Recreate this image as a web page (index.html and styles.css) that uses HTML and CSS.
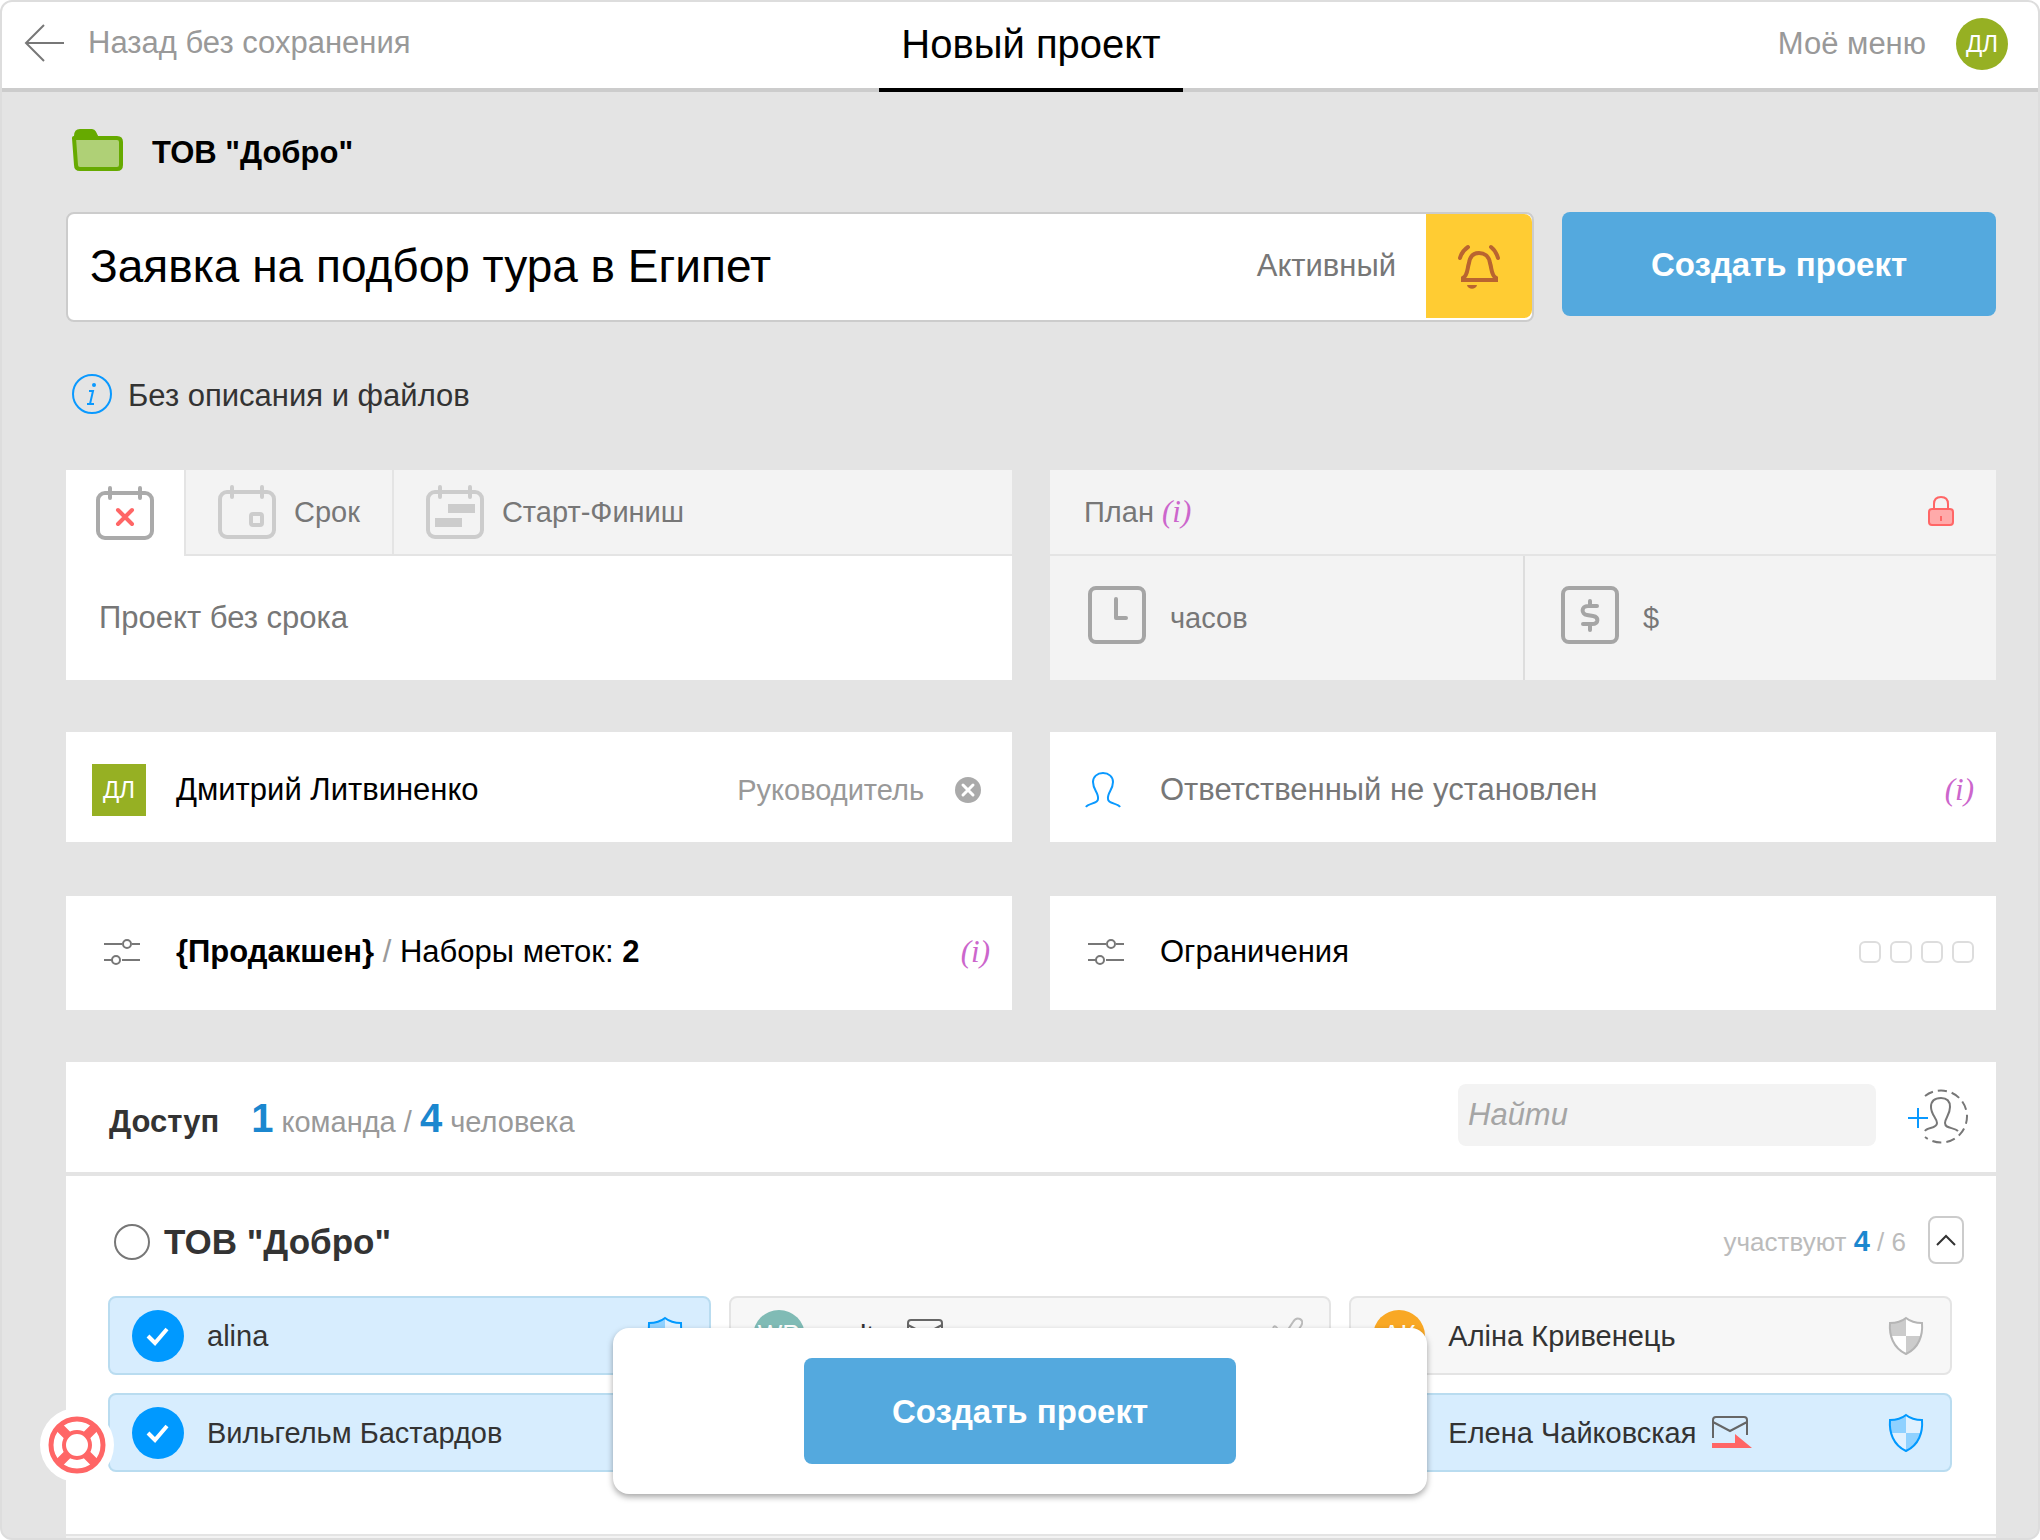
FILE: index.html
```html
<!DOCTYPE html>
<html lang="ru">
<head>
<meta charset="utf-8">
<title>Новый проект</title>
<meta name="viewport" content="width=device-width, initial-scale=1">
<link rel="stylesheet" href="styles.css">
</head>
<body>
<svg class="sprite" aria-hidden="true">
  <symbol id="calendar" viewBox="0 0 58 54">
    <rect x="2" y="7" width="54" height="45" rx="7" fill="none" stroke="currentColor" stroke-width="4"/>
    <path d="M14 2v10M44 2v10" stroke="currentColor" stroke-width="4" stroke-linecap="round"/>
  </symbol>
  <symbol id="sliders" viewBox="0 0 36 26">
    <g fill="none" stroke="currentColor" stroke-width="2">
      <path d="M0 5h18M28 5h8M0 21h8M18 21h18"/>
      <circle cx="23" cy="5" r="4"/><circle cx="12" cy="21" r="4"/>
    </g>
  </symbol>
  <symbol id="shield" viewBox="0 0 36 40">
    <path class="shield-base" d="M18 2C13 6 8 7 2 7C1 19 5 32 18 38C31 32 35 19 34 7C28 7 23 6 18 2z"/>
    <path class="shield-fill" d="M18 2C13 6 8 7 2 7C2 12 2 16 3 20H18zM18 20H33C31 28 27 34 18 38z"/>
    <path d="M18 2C13 6 8 7 2 7C1 19 5 32 18 38C31 32 35 19 34 7C28 7 23 6 18 2z" fill="none" stroke="currentColor" stroke-width="2"/>
  </symbol>
  <symbol id="mail" viewBox="0 0 40 34">
    <path d="M1 22V4q0-3 3-3h28q3 0 3 3v15M1 6l17 9L35 6" fill="none" stroke="#666" stroke-width="2"/>
    <path d="M0 27h23v-9l17 14H0z" fill="#f66"/>
  </symbol>
  <symbol id="check" viewBox="0 0 24 20">
    <path d="M2 10l7 7L21 3" fill="none" stroke="#fff" stroke-width="4"/>
  </symbol>
</svg>

<div class="frame">
  <header class="topbar">
    <a class="back" href="#">
      <svg width="40" height="40" viewBox="0 0 40 40"><path d="M20 2L2 20l18 18M2 20h38" fill="none" stroke="#777" stroke-width="2"/></svg>
      Назад без сохранения
    </a>
    <h1 class="page-title">Новый проект</h1>
    <a class="user-menu" href="#">Моё меню <span class="avatar avatar-green">ДЛ</span></a>
  </header>

  <main class="content">
    <div class="company">
      <svg width="52" height="44" viewBox="0 0 52 44">
        <path d="M3 8q0-6 5-6h12q2 0 3 2l2 4z" fill="#6a0" stroke="#6a0" stroke-width="2"/>
        <path d="M2 10h43q4 0 4 4v23q0 4-4 4H8q-4 0-4-4z" fill="#afd076" stroke="#6a0" stroke-width="4" stroke-linejoin="round"/>
      </svg>
      <strong>ТОВ "Добро"</strong>
    </div>

    <div class="title-row">
      <div class="title-box">
        <input class="title-input" type="text" aria-label="Название проекта" value="Заявка на подбор тура в Египет">
        <span class="status">Активный</span>
        <button class="bell" type="button" aria-label="Уведомления">
          <svg width="46" height="50" viewBox="0 0 46 50">
            <g fill="none" stroke="#b96430" stroke-width="4" stroke-linecap="round">
              <path d="M12 6Q6 10 4 17M35 6Q40 10 42 17"/>
              <path d="M7 39V37C12 34 11 28 13 22C14 15 18 12 23 12S33 15 34 22C36 28 35 34 40 37V39Z" stroke-linecap="butt"/>
            </g>
            <path d="M11 44h10c-1 5-9 5-10 0z" fill="#b96430"/>
          </svg>
        </button>
      </div>
      <button class="primary top-submit" type="button">Создать проект</button>
    </div>

    <div class="description">
      <svg width="40" height="40" viewBox="0 0 40 40">
        <circle cx="20" cy="20" r="19" fill="none" stroke="#0a99ff" stroke-width="2"/>
        <circle cx="22" cy="11" r="2" fill="#0a99ff"/>
        <path d="M17 17h4l-3 13h4M15 30h4" fill="none" stroke="#0a99ff" stroke-width="2"/>
      </svg>
      Без описания и файлов
    </div>

    <div class="pair">
      <section class="panel">
        <div class="tabs" role="tablist">
          <button class="tab active" type="button" role="tab" aria-selected="true" aria-label="Без срока">
            <svg width="58" height="54" viewBox="0 0 58 54"><use href="#calendar"/><path d="M22 24l14 14M36 24L22 38" stroke="#f66" stroke-width="4" stroke-linecap="round"/></svg>
          </button>
          <button class="tab" type="button" role="tab" aria-selected="false">
            <svg width="58" height="54" viewBox="0 0 58 54"><use href="#calendar"/><rect x="33" y="29" width="11" height="11" rx="2" fill="none" stroke="currentColor" stroke-width="4"/></svg>
            Срок
          </button>
          <button class="tab wide" type="button" role="tab" aria-selected="false">
            <svg width="58" height="54" viewBox="0 0 58 54"><use href="#calendar"/><path d="M22 19h27v9H22zM9 33h27v9H9z" fill="currentColor"/></svg>
            Старт-Финиш
          </button>
        </div>
        <p class="term">Проект без срока</p>
      </section>

      <section class="panel plan">
        <div class="plan-head">
          <span>План <em class="hint">(i)</em></span>
          <svg width="26" height="30" viewBox="0 0 26 30">
            <path d="M6 13V8q0-7 7-7t7 7v5" fill="none" stroke="#f66" stroke-width="2"/>
            <rect x="1" y="13" width="24" height="16" rx="3" fill="#faa" stroke="#f66" stroke-width="2"/>
            <path d="M13 20v5" stroke="#f66" stroke-width="2"/>
          </svg>
        </div>
        <div class="plan-fields">
          <label class="plan-field">
            <svg width="58" height="58" viewBox="0 0 58 58"><rect x="2" y="2" width="54" height="54" rx="6" fill="none" stroke="#a5a5a5" stroke-width="4"/><path d="M28 13v19h10" fill="none" stroke="#a5a5a5" stroke-width="4" stroke-linecap="round" stroke-linejoin="round"/></svg>
            <input type="text" placeholder="часов" aria-label="часов">
          </label>
          <label class="plan-field">
            <svg width="58" height="58" viewBox="0 0 58 58"><rect x="2" y="2" width="54" height="54" rx="6" fill="none" stroke="#a5a5a5" stroke-width="4"/><path d="M36 20H27C20 20 20 28 26 29L32 30C38 31 38 38 31 38H22M29 15v5M29 38v6" fill="none" stroke="#a5a5a5" stroke-width="4" stroke-linecap="round"/></svg>
            <input type="text" placeholder="$" aria-label="$">
          </label>
        </div>
      </section>
    </div>

    <div class="pair people">
      <section class="panel line">
        <span class="lead lead-square"><span class="square">ДЛ</span></span>
        <span class="grow">Дмитрий Литвиненко</span>
        <span class="role">Руководитель</span>
        <button class="clear" type="button" aria-label="Убрать">
          <svg width="26" height="26" viewBox="0 0 26 26"><circle cx="13" cy="13" r="13" fill="#aaa"/><path d="M8 8l10 10M18 8L8 18" stroke="#fff" stroke-width="3" stroke-linecap="round"/></svg>
        </button>
      </section>
      <section class="panel line">
        <span class="lead">
          <svg width="36" height="36" viewBox="0 0 36 36"><path d="M1 35C3 31 13 32 13 27C14 21 8 18 8 10C8 5 12 1 18 1S28 5 28 10C28 18 22 21 23 27C23 32 33 31 35 35" fill="none" stroke="#0a99ff" stroke-width="2"/></svg>
        </span>
        <span class="grow muted">Ответственный не установлен</span>
        <em class="hint">(i)</em>
      </section>
    </div>

    <div class="pair options">
      <section class="panel line">
        <span class="lead lead-sliders"><svg width="36" height="26"><use href="#sliders"/></svg></span>
        <span class="grow"><strong>{Продакшен}</strong> <span class="slash">/</span> Наборы меток: <strong>2</strong></span>
        <em class="hint">(i)</em>
      </section>
      <section class="panel line">
        <span class="lead lead-sliders"><svg width="36" height="26"><use href="#sliders"/></svg></span>
        <span class="grow">Ограничения</span>
        <span class="limits">
          <input type="checkbox" aria-label="Ограничение 1">
          <input type="checkbox" aria-label="Ограничение 2">
          <input type="checkbox" aria-label="Ограничение 3">
          <input type="checkbox" aria-label="Ограничение 4">
        </span>
      </section>
    </div>

    <section class="access">
      <div class="access-head">
        <h2>Доступ</h2>
        <p class="totals"><b>1</b> команда / <b>4</b> человека</p>
        <input class="search" type="search" placeholder="Найти" aria-label="Найти">
        <button class="add" type="button" aria-label="Добавить человека">
          <svg width="60" height="56" viewBox="0 0 60 56" fill="none" stroke-width="2">
            <path d="M17 7A26 26 0 1 1 17 48" stroke="#777" stroke-dasharray="9 5"/>
            <path d="M17 42C19 38 29 40 29 34C29 29 23 26 23 18C23 12 27 9 33 9S42 12 42 18C42 26 37 29 37 34C37 40 46 38 50 42" stroke="#777"/>
            <path d="M0 29h20M10 19v20" stroke="#0a99ff"/>
          </svg>
        </button>
      </div>

      <div class="team">
        <div class="team-head">
          <label class="team-name"><input type="radio" name="team"> ТОВ "Добро"</label>
          <span class="joined">участвуют <b>4</b> / 6</span>
          <button class="collapse" type="button" aria-label="Свернуть">
            <svg width="20" height="12" viewBox="0 0 20 12"><path d="M1 11l9-9 9 9" fill="none" stroke="#333" stroke-width="2"/></svg>
          </button>
        </div>
        <div class="members">
          <label class="member selected">
            <input type="checkbox" checked>
            <span class="avatar"><svg width="24" height="20"><use href="#check"/></svg></span>
            <span class="name">alina</span>
            <svg class="shield" width="36" height="40"><use href="#shield"/></svg>
          </label>
          <label class="member">
            <input type="checkbox">
            <span class="avatar avatar-teal">WP</span>
            <span class="name">aalto <svg width="40" height="34"><use href="#mail"/></svg></span>
            <svg class="tool" width="36" height="40" viewBox="0 0 36 40"><path d="M9 32L26 6Q29 1 33 3T34 10L16 36M14 21L10 12Q7 8 6 13L7 28" fill="none" stroke="#bbb" stroke-width="2"/></svg>
          </label>
          <label class="member">
            <input type="checkbox">
            <span class="avatar avatar-orange">АК</span>
            <span class="name">Аліна Кривенець</span>
            <svg class="shield" width="36" height="40"><use href="#shield"/></svg>
          </label>
          <label class="member selected">
            <input type="checkbox" checked>
            <span class="avatar"><svg width="24" height="20"><use href="#check"/></svg></span>
            <span class="name">Вильгельм Бастардов</span>
            <svg class="shield" width="36" height="40"><use href="#shield"/></svg>
          </label>
          <label class="member selected last-column">
            <input type="checkbox" checked>
            <span class="avatar"><svg width="24" height="20"><use href="#check"/></svg></span>
            <span class="name">Елена Чайковская <svg width="40" height="34"><use href="#mail"/></svg></span>
            <svg class="shield" width="36" height="40"><use href="#shield"/></svg>
          </label>
        </div>
      </div>
      <div class="next-team"></div>
    </section>
  </main>
</div>

<div class="action-bar">
  <button class="primary" type="button">Создать проект</button>
</div>

<button class="help" type="button" aria-label="Помощь">
  <svg width="58" height="58" viewBox="0 0 58 58" fill="none" stroke="#f66">
    <circle cx="29" cy="29" r="26" stroke-width="5"/>
    <circle cx="29" cy="29" r="13" stroke-width="4"/>
    <path d="M11 11l9 9M47 11l-9 9M11 47l9-9M47 47l-9-9" stroke-width="9"/>
  </svg>
</button>
</body>
</html>
```
FILE: styles.css
```css
* {
  box-sizing: border-box;
}

body {
  margin: 0;
  background: #fff;
  color: #000;
  font: 31px/36px "Liberation Sans", Arial, sans-serif;
}

h1, h2, p {
  margin: 0;
}

button, input {
  font: inherit;
  color: inherit;
  margin: 0;
}

button {
  padding: 0;
  border: 0;
  background: none;
  cursor: pointer;
}

input {
  min-width: 0;
  outline: 0;
}

a {
  color: inherit;
  text-decoration: none;
}

svg {
  display: block;
  flex: none;
}

.sprite {
  position: absolute;
  width: 0;
  height: 0;
}

.frame {
  min-height: 100vh;
  border: 2px solid #ddd;
  border-radius: 12px;
  background: #e4e4e4;
  overflow: hidden;
}

/* Top bar */
.topbar {
  display: grid;
  grid-template-columns: 1fr auto 1fr;
  height: 90px;
  padding-left: 22px;
  border-bottom: 4px solid #ccc;
  background: #fff;
  color: #999;
}

.back {
  display: flex;
  align-items: center;
  gap: 24px;
  padding-bottom: 4px;
  height: 86px;
}

.page-title {
  height: 90px;
  padding: 0 22px;
  border-bottom: 4px solid #000;
  color: #000;
  font-size: 40px;
  font-weight: 400;
  line-height: 84px;
}

.user-menu {
  display: flex;
  align-items: center;
  justify-content: flex-end;
  gap: 30px;
  height: 86px;
  padding: 0 30px 2px 0;
}

.avatar {
  display: flex;
  flex: none;
  align-items: center;
  justify-content: center;
  width: 52px;
  height: 52px;
  border-radius: 50%;
  background: #09f;
  color: #fff;
  font-size: 24px;
}

.avatar-green { background: #96b023; }

.avatar-teal,
.avatar-orange {
  padding-bottom: 4px;
  font-size: 26px;
}

.avatar-teal { background: #80bbb5; }
.avatar-orange { background: #f9a825; }

/* Project title */
.content {
  padding: 0 42px 0 64px;
}

.company {
  display: flex;
  align-items: center;
  gap: 28px;
  height: 120px;
  padding-left: 6px;
}

.company svg {
  margin-bottom: 4px;
}

.company strong {
  padding-top: 2px;
}

.title-row {
  display: flex;
  align-items: flex-start;
  gap: 28px;
}

.title-box {
  display: flex;
  flex: 1;
  align-items: flex-start;
  height: 110px;
  border: 2px solid #ccc;
  border-radius: 8px;
  background: #fff;
}

.title-input {
  flex: 1;
  height: 104px;
  padding: 0 0 0 22px;
  border: 0;
  background: none;
  font-size: 46px;
}

.status {
  padding-right: 30px;
  color: #777;
  line-height: 104px;
}

.bell {
  display: flex;
  align-items: center;
  justify-content: center;
  width: 106px;
  height: 104px;
  border-radius: 0 8px 8px 0;
  background: #fc3;
}

.primary {
  padding-top: 2px;
  border-radius: 8px;
  background: #54a9de;
  color: #fff;
  font-size: 33px;
  font-weight: 700;
}

.top-submit {
  width: 434px;
  height: 104px;
}

.description {
  display: flex;
  align-items: center;
  gap: 16px;
  height: 148px;
  padding-left: 6px;
  color: #333;
}

.description svg {
  margin-bottom: 4px;
}

/* Panels */
.pair {
  display: grid;
  grid-template-columns: repeat(2, minmax(0, 1fr));
  gap: 38px;
  margin-bottom: 52px;
}

.panel {
  background: #fff;
}

.tabs {
  display: flex;
  height: 86px;
  background: linear-gradient(#f3f3f3, #f3f3f3) 0 0 / 100% 84px no-repeat #e4e4e4;
}

.tab {
  display: flex;
  align-items: center;
  gap: 18px;
  height: 84px;
  padding: 0 32px;
  border-right: 2px solid #e4e4e4;
  color: #777;
  font-size: 29px;
}

.tab svg {
  color: #ccc;
}

.tab.active {
  height: 86px;
  padding: 0 30px;
  background: #fff;
}

.tab.active svg {
  color: #aaa;
}

.tab.wide {
  border: 0;
}

.term {
  padding: 0 33px;
  color: #777;
  line-height: 124px;
}

.plan {
  background: #f3f3f3;
  color: #777;
  font-size: 29px;
}

.plan-head {
  display: flex;
  align-items: center;
  justify-content: space-between;
  height: 86px;
  padding: 0 42px 0 34px;
  border-bottom: 2px solid #e4e4e4;
}

.plan-head svg {
  margin-bottom: 2px;
}

.hint {
  color: #c6c;
  font-family: "Liberation Serif", serif;
  font-size: 31px;
}

.plan-fields {
  display: grid;
  grid-template-columns: repeat(2, minmax(0, 1fr));
}

.plan-field {
  display: flex;
  align-items: center;
  gap: 24px;
  height: 124px;
  padding: 0 38px;
}

.plan-field + .plan-field {
  border-left: 2px solid #ddd;
  padding-left: 36px;
}

.plan-field svg {
  margin-bottom: 6px;
}

.plan-field input {
  flex: 1;
  padding: 0;
  border: 0;
  background: none;
}

::placeholder {
  color: #777;
  opacity: 1;
}

.line {
  display: flex;
  align-items: center;
  padding: 6px 22px 0 0;
  height: 110px;
}

.people {
  margin-bottom: 54px;
}

.options .line {
  height: 114px;
  padding-top: 0;
  padding-bottom: 2px;
}

.lead {
  flex: none;
  width: 110px;
  padding-left: 35px;
}

.lead-square {
  padding-left: 26px;
}

.lead-sliders {
  padding-left: 38px;
  color: #777;
}

.square {
  display: flex;
  align-items: center;
  justify-content: center;
  width: 54px;
  height: 52px;
  background: #96b023;
  color: #fff;
  font-size: 24px;
}

.grow {
  flex: 1;
}

.muted {
  color: #777;
}

.slash {
  color: #999;
}

.role {
  color: #999;
  font-size: 29px;
}

.clear {
  margin: 0 9px 0 31px;
}

.limits {
  display: flex;
  gap: 9px;
}

.limits input {
  width: 22px;
  height: 22px;
  border: 2px solid #ddd;
  border-radius: 6px;
  appearance: none;
}

/* Access */
.access-head {
  display: flex;
  align-items: center;
  height: 110px;
  padding: 0 28px 0 43px;
  background: #fff;
}

.access-head h2 {
  padding-top: 10px;
  color: #333;
  font-size: 31px;
}

.totals {
  flex: 1;
  padding: 6px 0 0 32px;
  color: #999;
  font-size: 29px;
}

.totals b {
  color: #1b87cf;
  font-size: 40px;
}

.search {
  width: 418px;
  height: 62px;
  margin-bottom: 4px;
  padding: 0 10px;
  border: 0;
  border-radius: 8px;
  background: #f3f3f3;
  font-style: italic;
  appearance: none;
}

.search::placeholder {
  color: #a5a5a5;
}

.add {
  margin-left: 32px;
}

.team {
  min-height: 358px;
  margin-top: 4px;
  padding: 0 44px 62px 42px;
  background: #fff;
}

.team-head {
  display: flex;
  align-items: center;
  height: 120px;
  margin-right: -12px;
  padding-top: 8px;
}

.team-name {
  display: flex;
  flex: 1;
  align-items: center;
  gap: 14px;
  padding: 3px 0 0 6px;
  color: #333;
  font-size: 35px;
  font-weight: 700;
}

.team-name input {
  width: 36px;
  height: 36px;
  border: 2px solid #777;
  border-radius: 50%;
  appearance: none;
}

.joined {
  padding: 3px 22px 0 0;
  color: #bbb;
  font-size: 26px;
}

.joined b {
  color: #1b87cf;
  font-size: 29px;
}

.collapse {
  display: flex;
  align-items: center;
  justify-content: center;
  width: 36px;
  height: 48px;
  border: 2px solid #ccc;
  border-radius: 8px;
}

.members {
  display: grid;
  grid-template-columns: repeat(3, 1fr);
  gap: 18px;
}

.member {
  display: flex;
  align-items: center;
  height: 79px;
  padding: 0 26px 0 22px;
  border: 2px solid #e4e4e4;
  border-radius: 8px;
  background: #f7f7f7;
  color: #333;
  font-size: 29px;
  cursor: pointer;
}

.member.selected {
  border-color: #b9dcf0;
  background: #d7edfe;
}

.member input {
  position: absolute;
  opacity: 0;
}

.last-column {
  grid-column: 3;
}

.name {
  display: flex;
  flex: 1;
  align-items: center;
  gap: 16px;
  padding-left: 23px;
}

.shield {
  color: #b5b5b5;
  --base: #fff;
  --fill: #ccc;
}

.selected .shield {
  color: #09f;
  --base: #e0f1ff;
  --fill: #8fd1ff;
}

.shield-base { fill: var(--base); }
.shield-fill { fill: var(--fill); }

.next-team {
  height: 2px;
  margin-top: 2px;
  background: #f3f3f3;
}

/* Floating controls */
.action-bar {
  position: fixed;
  bottom: 46px;
  left: 50%;
  display: flex;
  align-items: center;
  justify-content: center;
  width: 814px;
  height: 166px;
  transform: translateX(-50%);
  border-radius: 16px;
  background: #fff;
  box-shadow: 0 3px 6px rgba(0, 0, 0, .35);
}

.action-bar .primary {
  width: 432px;
  height: 106px;
}

.help {
  position: fixed;
  bottom: 58px;
  left: 40px;
  display: flex;
  align-items: center;
  justify-content: center;
  width: 74px;
  height: 74px;
  border-radius: 50%;
  background: #fff;
}
```
